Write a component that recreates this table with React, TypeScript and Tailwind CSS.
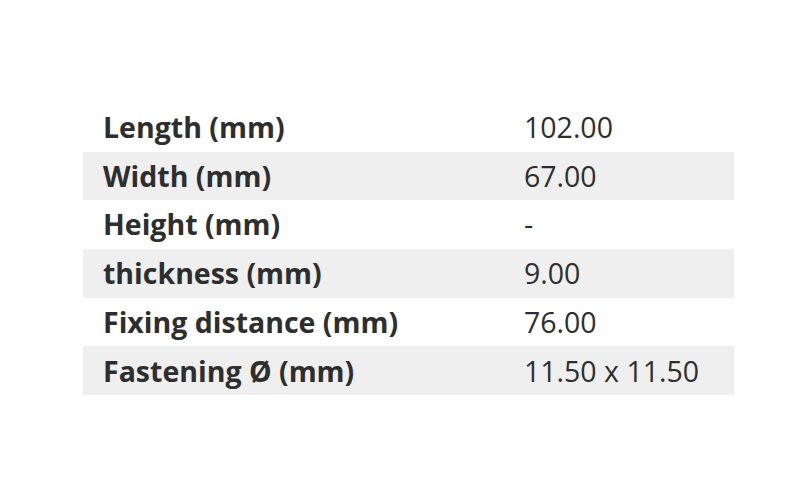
import React from "react";

const rows: [string, string][] = [
  ["Length (mm)", "102.00"],
  ["Width (mm)", "67.00"],
  ["Height (mm)", "-"],
  ["thickness (mm)", "9.00"],
  ["Fixing distance (mm)", "76.00"],
  ["Fastening Ø (mm)", "11.50 x 11.50"],
];

export default function App() {
  return (
    <div
      className="w-[800px] h-[500px] bg-white pt-[103px] pl-[83px]"
      style={{ fontFamily: '"Open Sans", "Noto Sans", sans-serif' }}
    >
      <div className="w-[651px] flex flex-col text-[#2e2e2e]">
        {rows.map(([k, v], i) => (
          <div
            key={k}
            className={`flex items-center h-[48.7px] text-[28.5px] leading-none ${i % 2 === 1 ? "bg-[#efefef]" : "bg-white"}`}
          >
            <div className="w-[441px] pl-[20px] font-bold">{k}</div>
            <div className="flex-1">{v}</div>
          </div>
        ))}
      </div>
    </div>
  );
}
